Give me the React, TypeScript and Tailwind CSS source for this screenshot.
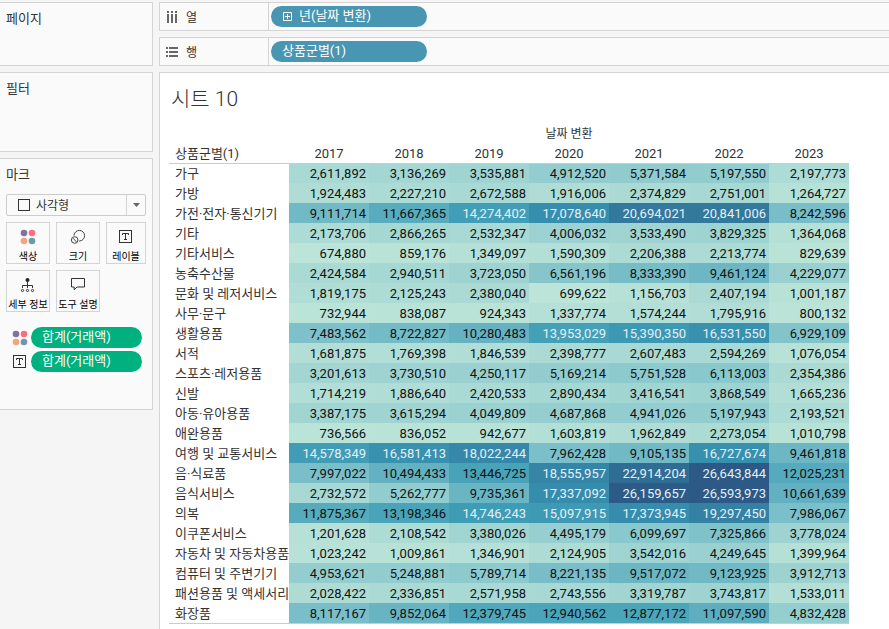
import type { ReactNode } from "react";

const YEARS = ["2017", "2018", "2019", "2020", "2021", "2022", "2023"];

const ROWS: [string, number[]][] = [
  ["가구", [2611892, 3136269, 3535881, 4912520, 5371584, 5197550, 2197773]],
  ["가방", [1924483, 2227210, 2672588, 1916006, 2374829, 2751001, 1264727]],
  ["가전·전자·통신기기", [9111714, 11667365, 14274402, 17078640, 20694021, 20841006, 8242596]],
  ["기타", [2173706, 2866265, 2532347, 4006032, 3533490, 3829325, 1364068]],
  ["기타서비스", [674880, 859176, 1349097, 1590309, 2206388, 2213774, 829639]],
  ["농축수산물", [2424584, 2940511, 3723050, 6561196, 8333390, 9461124, 4229077]],
  ["문화 및 레저서비스", [1819175, 2125243, 2380040, 699622, 1156703, 2407194, 1001187]],
  ["사무·문구", [732944, 838087, 924343, 1337774, 1574244, 1795916, 800132]],
  ["생활용품", [7483562, 8722827, 10280483, 13953029, 15390350, 16531550, 6929109]],
  ["서적", [1681875, 1769398, 1846539, 2398777, 2607483, 2594269, 1076054]],
  ["스포츠·레저용품", [3201613, 3730510, 4250117, 5169214, 5751528, 6113003, 2354386]],
  ["신발", [1714219, 1886640, 2420533, 2890434, 3416541, 3868549, 1665236]],
  ["아동·유아용품", [3387175, 3615294, 4049809, 4687868, 4941026, 5197943, 2193521]],
  ["애완용품", [736566, 836052, 942677, 1603819, 1962849, 2273054, 1010798]],
  ["여행 및 교통서비스", [14578349, 16581413, 18022244, 7962428, 9105135, 16727674, 9461818]],
  ["음·식료품", [7997022, 10494433, 13446725, 18555957, 22914204, 26643844, 12025231]],
  ["음식서비스", [2732572, 5262777, 9735361, 17337092, 26159657, 26593973, 10661639]],
  ["의복", [11875367, 13198346, 14746243, 15097915, 17373945, 19297450, 7986067]],
  ["이쿠폰서비스", [1201628, 2108542, 3380026, 4495179, 6099697, 7325866, 3778024]],
  ["자동차 및 자동차용품", [1023242, 1009861, 1346901, 2124905, 3542016, 4249645, 1399964]],
  ["컴퓨터 및 주변기기", [4953621, 5248881, 5789714, 8221135, 9517072, 9123925, 3912713]],
  ["패션용품 및 액세서리", [2028422, 2336851, 2571958, 2743556, 3319787, 3743817, 1533011]],
  ["화장품", [8117167, 9852064, 12379745, 12940562, 12877172, 11097590, 4832428]],
];

// blue-teal sequential ramp, light to dark
const RAMP = [
  "bce4d8", "aedcd5", "a1d5d2", "95cecf", "89c8cc", "7ec1ca", "72bac6",
  "66b2c2", "59acbe", "4ba5ba", "419eb6", "3b96b2", "358ead", "3586a7",
  "347ea1", "32779b", "316f96", "2f6790", "2d608a", "2c5985",
];

const ALL = ROWS.flatMap(([, values]) => values);
const MIN = Math.min(...ALL);
const MAX = Math.max(...ALL);

function channels(hex: string) {
  return [0, 2, 4].map((i) => parseInt(hex.slice(i, i + 2), 16));
}

function heat(value: number) {
  const pos = ((value - MIN) / (MAX - MIN)) * (RAMP.length - 1);
  const i = Math.min(Math.floor(pos), RAMP.length - 2);
  const a = channels(RAMP[i]);
  const b = channels(RAMP[i + 1]);
  const rgb = a.map((c, k) => Math.round(c + (b[k] - c) * (pos - i)));
  return `rgb(${rgb.join(",")})`;
}

function ColorIcon() {
  return (
    <svg width="16" height="16" viewBox="0 0 16 16" className="shrink-0">
      <circle cx="4" cy="4" r="3.3" fill="#85709a" />
      <circle cx="12" cy="4" r="3.3" fill="#f8707f" />
      <circle cx="4" cy="12" r="3.3" fill="#f3a67b" />
      <circle cx="12" cy="12" r="3.3" fill="#6d9aa8" />
    </svg>
  );
}

function SizeIcon() {
  return (
    <svg width="16" height="16" viewBox="0 0 16 16" fill="none" stroke="#444">
      <circle cx="9.3" cy="6.7" r="5.3" />
      <circle cx="4.7" cy="11" r="4.4" fill="#fafafa" stroke="none" />
      <circle cx="4.7" cy="11" r="3.3" />
      <path d="M3.2 9.3 6.4 12.9" />
    </svg>
  );
}

function LabelIcon() {
  return (
    <svg width="16" height="16" viewBox="0 0 16 16" fill="none" stroke="#333" className="shrink-0">
      <rect x="1.5" y="1.5" width="12" height="12" />
      <path d="M4.5 6V4.5h6V6M7.5 4.5v6M6 10.5h3" />
    </svg>
  );
}

function DetailIcon() {
  return (
    <svg width="16" height="16" viewBox="0 0 16 16" fill="none" stroke="#333">
      <circle cx="7.5" cy="3" r="2" fill="#222" stroke="none" />
      <path d="M7.5 4v7M2.5 11V8.5h10V11" />
      <circle cx="2.5" cy="13.5" r="1.1" />
      <circle cx="7.5" cy="13.5" r="1.1" />
      <circle cx="12.5" cy="13.5" r="1.1" />
    </svg>
  );
}

function TooltipIcon() {
  return (
    <svg width="16" height="16" viewBox="0 0 16 16" fill="none" stroke="#333">
      <path d="M1.5 1.5h13v8.5H7L4.2 12.8V10H1.5z" />
    </svg>
  );
}

function ColumnsIcon() {
  return (
    <svg width="12" height="12" viewBox="0 0 12 12" fill="#666">
      <path d="M1 0h2v2H1zM5 0h2v2H5zM9 0h2v2H9zM1 3h2v9H1zM5 3h2v9H5zM9 3h2v9H9z" />
    </svg>
  );
}

function RowsIcon() {
  return (
    <svg width="12" height="12" viewBox="0 0 12 12" fill="#666">
      <path d="M0 1h2v2H0zM0 5h2v2H0zM0 9h2v2H0zM3 1h9v2H3zM3 5h9v2H3zM3 9h9v2H3z" />
    </svg>
  );
}

function PlusBoxIcon() {
  return (
    <svg width="9" height="9" viewBox="0 0 9 9" fill="none" stroke="#fff">
      <path d="M.5.5h8v8h-8zM4.5 2v5M2 4.5h5" />
    </svg>
  );
}

function Panel({ title, className, children }: { title: string; className: string; children?: ReactNode }) {
  return (
    <section className={`border border-l-0 border-[#d4d4d4] bg-[#fafafa] pt-1.5 ${className}`}>
      <h2 className="pl-1.5 leading-5">{title}</h2>
      {children}
    </section>
  );
}

function Shelf({ icon, label, children }: { icon: ReactNode; label: string; children: ReactNode }) {
  return (
    <section className="flex h-[29px] border border-r-0 border-[#d4d4d4] bg-[#fafafa]">
      <div className="flex w-[109px] shrink-0 items-center gap-2 border-r border-[#d4d4d4] pl-1.5">
        {icon}
        <h2 className="pt-0.5 text-xs">{label}</h2>
      </div>
      <div className="flex flex-1 items-center pl-0.5">{children}</div>
    </section>
  );
}

function MarkButton({ icon, label }: { icon: ReactNode; label: string }) {
  return (
    <button className="flex h-[42px] flex-col items-center justify-between border border-[#d4d4d4] bg-[#fafafa] pt-1.5 text-[10px] leading-3 whitespace-nowrap text-black">
      {icon}
      {label}
    </button>
  );
}

function MarkPill({ icon }: { icon: ReactNode }) {
  return (
    <li className="flex items-center gap-[3px]">
      {icon}
      <button className="h-[21px] flex-1 rounded-full bg-[#00b180] pb-0.5 pl-[11px] text-left leading-[19px] text-white">
        합계(거래액)
      </button>
    </li>
  );
}

export default function App() {
  return (
    <div className="flex min-h-screen gap-1.5 bg-[#f5f5f5] pt-0.5 font-['Roboto','Noto_Sans_CJK_KR',sans-serif] text-[13px] text-[#333]">
      <aside className="flex w-[153px] shrink-0 flex-col gap-1.5">
        <Panel title="페이지" className="h-16" />
        <Panel title="필터" className="h-20" />
        <Panel title="마크" className="h-[252px]">
          <div className="mx-1.5 mt-[9px] flex h-[22px] items-center rounded-xs border border-[#ccc] text-xs">
            <svg width="12" height="12" viewBox="0 0 12 12" fill="none" stroke="#333" className="ml-[11px]">
              <rect x="0.5" y="0.5" width="11" height="11" />
            </svg>
            <select aria-label="마크 유형" className="ml-1.5 h-full min-w-0 flex-1 appearance-none bg-transparent pt-0.5 outline-none">
              <option>사각형</option>
            </select>
            <div className="pointer-events-none flex h-full w-[19px] items-center justify-center border-l border-[#d4d4d4]">
              <svg width="7" height="4" viewBox="0 0 7 4" fill="#666">
                <path d="M0 0h7L3.5 4z" />
              </svg>
            </div>
          </div>
          <div className="mx-1.5 mt-1.5 grid grid-cols-[44px_44px_40px] gap-1.5">
            <MarkButton icon={<ColorIcon />} label="색상" />
            <MarkButton icon={<SizeIcon />} label="크기" />
            <MarkButton icon={<LabelIcon />} label="레이블" />
            <MarkButton icon={<DetailIcon />} label="세부 정보" />
            <MarkButton icon={<TooltipIcon />} label="도구 설명" />
          </div>
          <ul className="mt-[15px] mr-2.5 ml-3 flex flex-col gap-[3px]">
            <MarkPill icon={<ColorIcon />} />
            <MarkPill icon={<LabelIcon />} />
          </ul>
        </Panel>
      </aside>

      <main className="flex min-w-0 flex-1 flex-col gap-1.5">
        <Shelf icon={<ColumnsIcon />} label="열">
          <button className="flex h-[21px] w-[156px] items-center gap-[7px] rounded-full bg-[#4996b2] pl-3 text-white">
            <PlusBoxIcon />
            <span className="pb-0.5 leading-[19px]">년(날짜 변환)</span>
          </button>
        </Shelf>
        <Shelf icon={<RowsIcon />} label="행">
          <button className="h-[21px] w-[156px] rounded-full bg-[#4996b2] pb-0.5 pl-[11px] text-left leading-[19px] text-white">
            상품군별(1)
          </button>
        </Shelf>

        <section className="flex-1 border-t border-l border-[#d4d4d4] bg-white pt-3 pb-1 pl-[9px]">
          <h1 className="mb-2.5 pl-0.5 text-[21px] leading-7 font-light">시트 10</h1>
          <table className="w-[680px] table-fixed border-separate border-spacing-0 border-b border-[#ccc] leading-[18px]">
            <colgroup>
              <col className="w-[120px]" />
              {YEARS.map((year) => (
                <col key={year} className="w-20" />
              ))}
            </colgroup>
            <thead>
              <tr>
                <td className="h-5 p-0" />
                <th colSpan={7} scope="colgroup" className="h-5 p-0 pt-0.5 text-xs leading-[18px] font-normal">
                  날짜 변환
                </th>
              </tr>
              <tr>
                <th scope="col" className="h-5 p-0 pt-0.5 pl-1.5 text-left font-normal">
                  상품군별(1)
                </th>
                {YEARS.map((year) => (
                  <th key={year} scope="col" className="h-5 p-0 pt-0.5 font-normal">
                    {year}
                  </th>
                ))}
              </tr>
            </thead>
            <tbody className="[&>tr:first-child>*]:border-t [&>tr:first-child>*]:border-[#ccc] [&>tr:first-child>*]:pt-px">
              {ROWS.map(([name, values]) => (
                <tr key={name}>
                  <th scope="row" className="h-5 overflow-hidden p-0 pt-0.5 pl-1.5 text-left font-normal whitespace-nowrap">
                    {name}
                  </th>
                  {values.map((value, i) => (
                    <td
                      key={YEARS[i]}
                      className={`h-5 p-0 pt-0.5 pr-[3px] text-right ${value > 13700000 ? "text-[#e6eff5]" : "text-[#111]"}`}
                      style={{ backgroundColor: heat(value) }}
                    >
                      {value.toLocaleString("en-US")}
                    </td>
                  ))}
                </tr>
              ))}
            </tbody>
          </table>
        </section>
      </main>
    </div>
  );
}
